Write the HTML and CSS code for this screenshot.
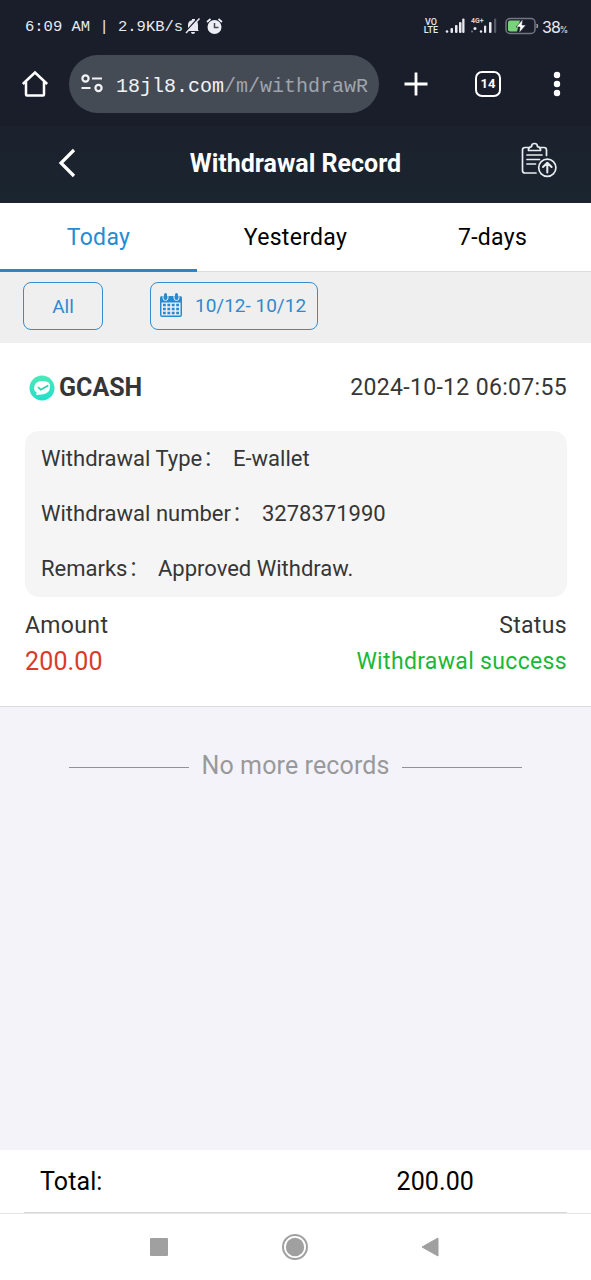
FILE: index.html
```html
<!DOCTYPE html>
<html lang="en">
<head>
<meta charset="utf-8">
<title>Withdrawal Record</title>
<link rel="stylesheet" href="styles.css">
</head>
<body>
<div class="screen">
  <div class="status-bar">
    <span class="status-time">6:09 AM | 2.9KB/s</span>
    <svg class="bell" width="16" height="18" viewBox="0 0 16 18"><path d="M3 13V8Q3 4 7 3.300V2h3v1.400Q13 4 13 8v5l1 1H2zM6 15h4Q10 17 8 17T6 15" fill="#e8eaf0"/><path d="M1 14.500L13 1" stroke="#1a1e2b" stroke-width="1.400"/><path d="M1 16L14.500 1.500" stroke="#e8eaf0" stroke-width="1.500"/></svg>
    <svg class="alarm" width="17" height="17" viewBox="0 0 17 17"><circle cx="8.500" cy="9" r="7" fill="#eceef3"/><path d="M1 4L4.500 1M16 4L12.500 1" stroke="#eceef3" stroke-width="1.700"/><path d="M8.500 5v4.500h4" fill="none" stroke="#444957" stroke-width="1.500"/></svg>
    <span class="status-fill"></span>
    <span class="volte"><span>VO</span><span>LTE</span></span>
    <svg class="signals" width="52" height="20" viewBox="0 0 52 20"><g fill="#e8eaf0"><circle cx="2" cy="15.500" r="1.300"/><rect x="5.500" y="12" width="2.500" height="5" rx="1"/><rect x="10" y="9" width="2.500" height="8" rx="1"/><rect x="14" y="6" width="2.500" height="11" rx="1"/><rect x="17.200" y="2.500" width="2.300" height="14.500" rx="1"/><circle cx="30" cy="12.500" r="1.500"/><circle cx="36" cy="15.500" r="1.200"/><rect x="39" y="9.500" width="2.200" height="7.500" rx="1"/><rect x="44" y="6" width="2.500" height="11" rx="1"/></g><rect x="49" y="2.500" width="2.200" height="14.500" rx="1" fill="#555a67"/><circle cx="27" cy="15.500" r="1" fill="#777c88"/><text x="26" y="6.500" class="net">4G+</text></svg>
    <svg class="battery" width="34" height="18" viewBox="0 0 34 18"><rect x="1" y="1.500" width="29" height="15" rx="4" fill="none" stroke="#71767f" stroke-width="1.500"/><path d="M5 3.500h10L12 14.500H5Q3 14.500 3 12.500v-7Q3 3.500 5 3.500" fill="#7ad27c"/><path d="M18 2L11 10h4l-1 6 7-8h-4z" fill="#fff" stroke="#1a1e2b" stroke-width=".6"/><path d="M32 7Q33.500 9 32 11z" fill="#9a9ea6" stroke="#9a9ea6"/></svg>
    <span class="percent">38<small>%</small></span>
  </div>
  <div class="browser-bar">
    <svg class="home" width="28" height="28" viewBox="0 0 28 28"><path d="M1.800 14L14 2.500 26.200 14M5 12v12.500q0 1 1 1h16q1 0 1-1V12" fill="none" stroke="#fff" stroke-width="2.500"/></svg>
    <div class="address">
      <svg width="24" height="20" viewBox="0 0 24 20" fill="none" stroke="#f2f3f5" stroke-width="2.200"><circle cx="5.500" cy="4.500" r="3.100"/><path d="M12 4.500h10M1.500 14h9"/><circle cx="18.500" cy="14" r="3.100"/></svg>
      <span class="url">18jl8.com<span class="path">/m/withdrawR</span></span>
    </div>
    <svg class="plus" width="24" height="24" viewBox="0 0 24 24"><path d="M12 .5v23M.5 12h23" stroke="#fff" stroke-width="2.800"/></svg>
    <span class="tab-count">14</span>
    <svg class="dots" width="8" height="26" viewBox="0 0 8 26" fill="#fff"><circle cx="4" cy="4" r="3.200"/><circle cx="4" cy="13" r="3.200"/><circle cx="4" cy="22" r="3.200"/></svg>
  </div>
  <header class="page-header">
    <svg class="back" width="20" height="30" viewBox="0 0 20 30"><path d="M17 2L4 15l13 13" fill="none" stroke="#fff" stroke-width="3.200"/></svg>
    <h1>Withdrawal Record</h1>
    <svg class="record-icon" width="36" height="36" viewBox="0 0 36 36" fill="none" stroke="#e9edf0" stroke-width="1.700" stroke-linecap="round" stroke-linejoin="round"><path d="M8 5.500H4q-2.500 0-2.500 2.500v20.500Q1.500 31 4 31h11M19 5.500h4q2.500 0 2.500 2.500v5.500M7.500 8.500h12V7Q18.500 5 16.500 4.700 16.500 1.500 13.500 1.500t-3 3.200Q8.500 5 7.500 7zM6 13h15M6 17.500h12.500M6 22h8.500"/><circle cx="26.300" cy="25.700" r="8.600"/><path d="M26.300 30.500v-9M22 25l4.300-4.300 4.300 4.300" stroke-width="2"/></svg>
  </header>
  <nav class="tabs"><span class="tab active">Today</span><span class="tab">Yesterday</span><span class="tab">7-days</span></nav>
  <div class="filters">
    <span class="filter all">All</span>
    <span class="filter date">
      <svg width="22" height="25" viewBox="0 0 22 25"><path d="M2 3h18q2 0 2 2v17q0 2-2 2H2q-2 0-2-2V5q0-2 2-2" fill="#268bd3"/><path d="M1.500 9.500h19v13h-19z" fill="#efefef"/><path d="M3 2v3a2.400 2.400 0 0 0 5 0V2M14 2v3a2.400 2.400 0 0 0 5 0V2" fill="none" stroke="#efefef"/><rect x="4" width="3" height="6" rx="1.500" fill="#268bd3"/><rect x="15" width="3" height="6" rx="1.500" fill="#268bd3"/><path d="M3 12h16M3 16h16M3 20h16" stroke="#268bd3" stroke-width="2.600" stroke-dasharray="2.800 1.600"/></svg>
      <span>10/12- 10/12</span>
    </span>
  </div>
  <article class="record">
    <div class="record-top">
      <svg width="26" height="26" viewBox="0 0 26 26"><defs><linearGradient id="mint" x2="0" y2="1"><stop stop-color="#4ce9b8"/><stop offset="1" stop-color="#20dfca"/></linearGradient></defs><circle cx="13" cy="13" r="12.500" fill="url(#mint)"/><path d="M5 13.500Q5 6 13.500 6T21 12Q21 19 12.500 19.500L7 20l.8-2.300Q5 16 5 13.500" fill="#fff"/><path d="M9 12.200l2.800 2.500 7.500-4.200" fill="none" stroke="#26cfb0" stroke-width="1.600"/></svg>
      <strong>GCASH</strong>
      <time>2024-10-12 06:07:55</time>
    </div>
    <div class="details">
      <div><span class="label type">Withdrawal Type<b>:</b></span><span>E-wallet</span></div>
      <div><span class="label number">Withdrawal number<b>:</b></span><span>3278371990</span></div>
      <div><span class="label remarks">Remarks<b>:</b></span><span>Approved Withdraw.</span></div>
    </div>
    <div class="summary"><span>Amount</span><span>Status</span></div>
    <div class="result"><span class="amount">200.00</span><span class="success">Withdrawal success</span></div>
  </article>
  <main class="empty"><div class="end-line"><i></i><span>No more records</span><i></i></div></main>
  <footer class="total"><span>Total:</span><span class="total-value">200.00</span></footer>
  <div class="system-nav">
    <svg width="18" height="18"><rect width="18" height="18" rx="1" fill="#a0a0a0"/></svg>
    <svg width="28" height="28" viewBox="0 0 28 28"><circle cx="14" cy="14" r="12" fill="none" stroke="#a0a0a0" stroke-width="2"/><circle cx="14" cy="14" r="9.200" fill="#a0a0a0"/></svg>
    <svg width="18" height="20"><path d="M17 1v18L1 10z" fill="#a0a0a0" stroke="#a0a0a0" stroke-linejoin="round"/></svg>
  </div>
</div>
</body>
</html>
```
FILE: styles.css
```css
* { box-sizing: border-box; }
body { margin: 0; font-family: Roboto, sans-serif; color: #363636; }
svg { display: block; flex: none; }
.screen { width: 591px; height: 1280px; display: flex; flex-direction: column; background: #fff; overflow: hidden; white-space: nowrap; }
.screen > * { flex: none; }
.status-bar { height: 52px; background: #1a1e2b; color: #e8eaf0; display: flex; align-items: center; padding: 0 24px 0 25px; }
.status-time { font: 15.5px "Liberation Mono", monospace; width: 160px; padding-top: 2px; }
.bell { margin-left: 0; }
.alarm { margin-left: 5px; }
.status-fill { flex: 1; }
.volte { display: flex; flex-direction: column; align-items: center; font-size: 9px; line-height: 8.5px; font-weight: 500; width: 16px; }
.signals { margin-left: 6px; }
.net { font: bold 7px Roboto, sans-serif; fill: #d0d3da; }
.battery { margin-left: 8px; }
.percent { font: 16px Inter, sans-serif; width: 25px; margin-left: 3px; padding-top: 1px; letter-spacing: -1px; }
.percent small { font-size: 8.5px; }
.browser-bar { height: 74px; background: #1a1e2b; display: flex; align-items: center; padding: 0 30px 10px 21px; }
.address { width: 310px; height: 58px; margin-left: 20px; border-radius: 29px; background: #454b55; display: flex; align-items: center; padding: 0 0 0 11px; }
.url { font: 20px "Liberation Mono", monospace; color: #f2f3f5; margin-left: 12px; padding-top: 4px; }
.path { color: #a0a4ad; }
.plus { margin-left: 25px; }
.tab-count { width: 26px; height: 26px; margin-left: 47px; border: 2.500px solid #fff; border-radius: 7px; color: #fff; font: bold 13px/22px Roboto, sans-serif; text-align: center; }
.dots { margin-left: 52px; }
.page-header { height: 77px; background: linear-gradient(#1b212d, #1a252f); display: grid; grid-template-columns: 20px 1fr 36px; align-items: center; padding: 0 34px 2px 57px; color: #fff; }
.back { margin-top: -2px; }
h1 { font-size: 25px; line-height: 30px; margin: 0; padding-right: 7px; text-align: center; }
.record-icon { margin-top: -7px; }
.tabs { height: 69px; display: grid; grid-template-columns: repeat(3, 1fr); border-bottom: 1px solid #dcdcdc; font-size: 23px; letter-spacing: .3px; color: #000; }
.tab { display: flex; align-items: center; justify-content: center; height: 69px; padding-bottom: 1px; }
.active { color: #268bd3; border-bottom: 3px solid #2c85cb; padding: 2px 0 0; }
.filters { height: 71px; background: #efefef; display: flex; padding: 10px 23px 0; gap: 47px; color: #3089ce; }
.filter { height: 48px; border: 1.500px solid #398ccd; border-radius: 8px; display: flex; align-items: center; }
.all { width: 80px; justify-content: center; font-size: 19px; }
.date { width: 168px; font-size: 19px; padding: 0 0 1px 9px; gap: 13px; }
.record { height: 364px; padding: 0 24px 0 25px; border-bottom: 1px solid #dadadd; }
.record-top { height: 88px; display: flex; align-items: center; padding: 1px 0 0 4px; }
.record-top strong { font-size: 25px; margin-left: 4px; }
time { font-size: 23px; letter-spacing: .33px; margin-left: auto; }
.details { height: 166px; border-radius: 14px; background: #f5f5f5; padding: 0 16px; display: grid; grid-template-rows: repeat(3, 55px); font-size: 22px; }
.details div { display: flex; align-items: center; padding-bottom: 1px; }
.label b { font-size: 25px; line-height: 20px; font-weight: 400; margin-left: 3px; }
.type { width: 192px; }
.number { width: 221px; }
.remarks { width: 117px; }
.summary, .result { display: flex; justify-content: space-between; align-items: center; }
.summary { height: 57px; font-size: 23px; letter-spacing: .35px; }
.result { height: 15px; font-size: 23px; letter-spacing: .33px; }
.amount { color: #d93b28; font-size: 25px; letter-spacing: .15px; }
.success { color: #19b936; }
.empty { height: 443px; background: #f4f3f9; padding-top: 43px; }
.end-line { height: 30px; display: flex; justify-content: center; align-items: center; gap: 12px; color: #99999b; font-size: 25px; letter-spacing: .12px; }
.end-line i { width: 120px; height: 1px; background: #929295; margin-top: 4px; }
.total { height: 64px; margin: 0; display: flex; align-items: center; padding: 0 117px 1px 40px; justify-content: space-between; color: #000; font-size: 25px; letter-spacing: .1px; background: linear-gradient(#d8d8d8, #d8d8d8) center bottom / 543px 1px no-repeat; border-bottom: 1px solid #e7e7e7; }
.system-nav { height: 66px; display: flex; align-items: center; padding: 0 152px 0 150px; justify-content: space-between; }
```
